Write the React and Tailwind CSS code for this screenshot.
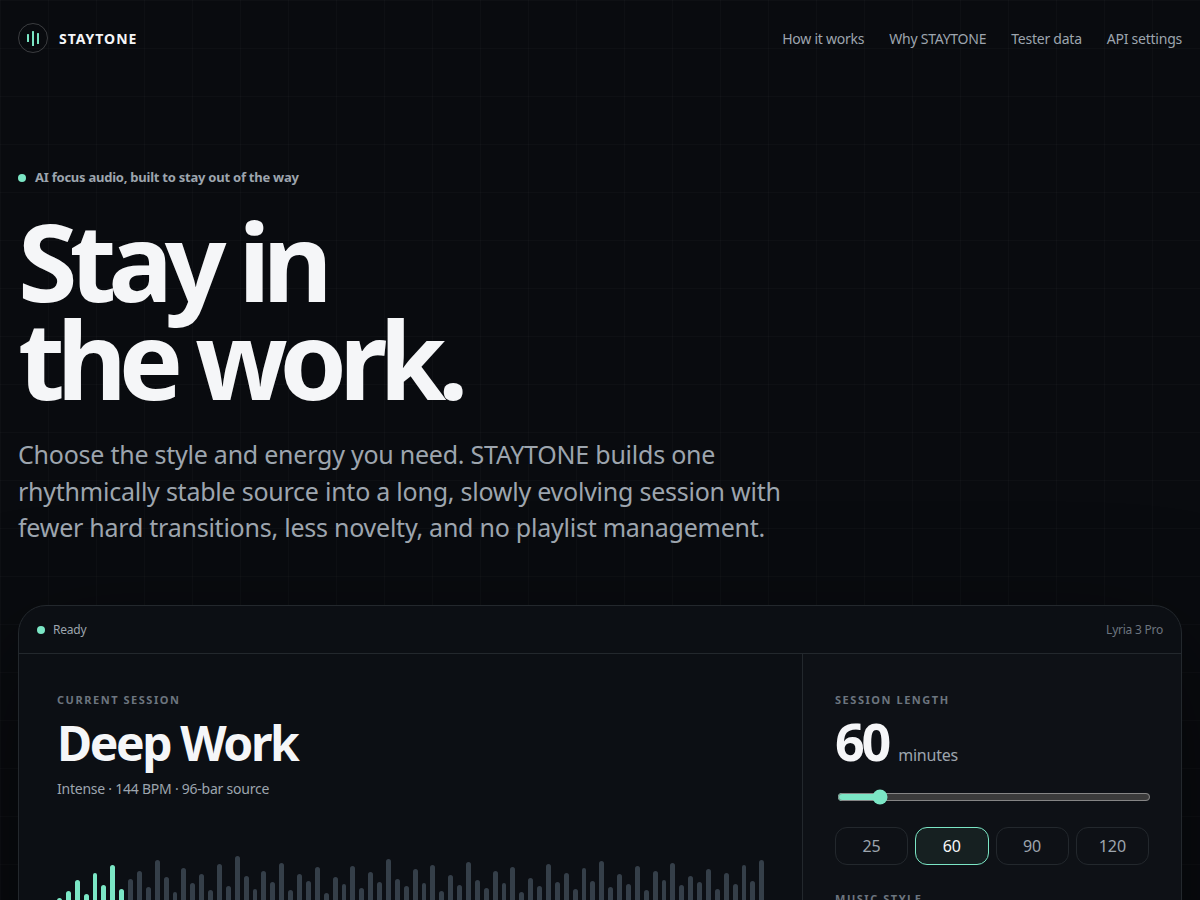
const NAV_LINKS = [
  { label: 'How it works', href: '#how' },
  { label: 'Why STAYTONE', href: '#why' },
  { label: 'Tester data', href: '#data' },
  { label: 'API settings', href: '#api' },
];

const PRESETS = [25, 60, 90, 120];

const PLAYED_BARS = 8;
const BAR_HEIGHTS = [
  44, 58, 80, 52, 94, 70, 110, 62, 82, 98, 66, 120, 86, 56, 104, 74, 92, 60, 112, 68,
  128, 88, 62, 98, 76, 114, 60, 92, 78, 106, 54, 86, 72, 108, 64, 96, 76, 122, 82, 68,
  102, 74, 110, 58, 90, 70, 116, 80, 64, 98, 74, 106, 56, 84, 68, 112, 76, 94, 62, 104,
  78, 118, 66, 92, 72, 108, 60, 98, 80, 114, 70, 88, 76, 102, 62, 94, 72, 110, 78, 120,
];

function Logo() {
  return (
    <a href="#top" className="flex items-center gap-[11px]">
      <span className="grid size-[30px] place-items-center rounded-full border border-white/20">
        <svg width="28" height="28" viewBox="0 0 28 28" aria-hidden="true">
          <g fill="#7be6c5">
            <rect x="8" y="10" width="2" height="8" rx="0.5" />
            <rect x="13" y="7" width="2" height="15" rx="0.5" />
            <rect x="18" y="9" width="2" height="11" rx="0.5" />
          </g>
        </svg>
      </span>
      <span className="text-sm leading-[21px] font-bold tracking-[0.07em]">STAYTONE</span>
    </a>
  );
}

function Header() {
  return (
    <header className="flex h-[76px] items-center justify-between">
      <Logo />
      <nav className="flex gap-[25px] text-sm leading-[21px] text-[#9da5ae]">
        {NAV_LINKS.map((link) => (
          <a key={link.label} href={link.href}>
            {link.label}
          </a>
        ))}
      </nav>
    </header>
  );
}

function Dot() {
  return <span className="size-2 shrink-0 rounded-full bg-[#7be6c5]" />;
}

function Label({ children }) {
  return (
    <div className="text-[11px] leading-4 font-bold tracking-[0.14em] text-[#6c757f] uppercase">
      {children}
    </div>
  );
}

function Waveform() {
  return (
    <div className="mt-[49px] flex h-[144px] items-center gap-1" aria-hidden="true">
      {BAR_HEIGHTS.map((height, i) => (
        <span
          key={i}
          className={i < PLAYED_BARS ? 'flex-1 rounded-full bg-[#7be6c5]' : 'flex-1 rounded-full bg-[#353f49]'}
          style={{ height }}
        />
      ))}
    </div>
  );
}

function SessionPanel() {
  return (
    <section className="min-w-0 flex-1 p-[38px]">
      <Label>Current session</Label>
      <h2 className="mt-[7px] text-[48px] leading-[56px] font-bold tracking-[-0.05em]">Deep Work</h2>
      <p className="mt-2 text-sm leading-5 text-[#9da5ae]">Intense · 144 BPM · 96-bar source</p>
      <Waveform />
    </section>
  );
}

function SettingsPanel() {
  return (
    <section className="w-[379px] border-l border-[#23282d] bg-[#0e1116] px-8 py-[38px]">
      <Label>
        <label htmlFor="length">Session length</label>
      </Label>
      <div className="mt-[5px] flex items-baseline gap-[10px]">
        <span className="text-[52px] leading-[56px] font-bold tracking-[-0.06em]">60</span>
        <span className="text-base text-[#9da5ae]">minutes</span>
      </div>
      <input
        id="length"
        type="range"
        min="20"
        max="360"
        step="5"
        defaultValue="60"
        className="m-[2px] mt-5 block w-full accent-[#7be6c5]"
      />
      <div className="mt-[22px] grid grid-cols-4 gap-[7px]">
        {PRESETS.map((minutes) => (
          <button
            key={minutes}
            type="button"
            className={
              minutes === 60
                ? 'h-[38px] rounded-xl border border-[#7be6c5] bg-[#162021] text-base tracking-normal text-[#f5f6f8]'
                : 'h-[38px] rounded-xl border border-[#23282d] text-base tracking-normal text-[#9da5ae]'
            }
          >
            {minutes}
          </button>
        ))}
      </div>
      <div className="mt-[26px]">
        <Label>Music style</Label>
      </div>
    </section>
  );
}

export default function App() {
  return (
    <div
      id="top"
      className="relative isolate min-h-screen overflow-hidden bg-[#090b0f] font-['Noto_Sans',sans-serif] tracking-[-0.015rem] text-[#f5f6f8] scheme-dark"
    >
      <div
        className="absolute inset-0 -z-10 bg-[linear-gradient(rgba(255,255,255,0.018)_1px,transparent_1px),linear-gradient(90deg,rgba(255,255,255,0.018)_1px,transparent_1px)] bg-size-[48px_48px]"
        aria-hidden="true"
      />
      <div className="px-[18px]">
        <Header />
        <main>
          <section className="pt-[91px]">
            <p className="flex items-center gap-[9px] text-[13px] leading-[21px] font-bold text-[#9da5ae]">
              <Dot />
              AI focus audio, built to stay out of the way
            </p>
            <h1 className="mt-6 text-[108px] leading-[98px] font-bold tracking-[-0.075em]">
              Stay in
              <br />
              the work.
            </h1>
            <p className="mt-7 max-w-[780px] text-[25px] leading-[1.46] text-[#9da5ae]">
              Choose the style and energy you need. STAYTONE builds one rhythmically stable source into a long,
              slowly evolving session with fewer hard transitions, less novelty, and no playlist management.
            </p>
          </section>
          <article className="mt-[59px] overflow-hidden rounded-[28px] border border-[#23282d] bg-[#0c0f14] shadow-[0_40px_120px_rgba(0,0,0,0.5)]">
            <div className="flex h-12 items-center justify-between border-b border-[#23282d] px-[18px] pt-0.5 text-xs">
              <span className="flex items-center gap-2 text-[#9da5ae]">
                <Dot />
                Ready
              </span>
              <span className="text-[#6c757f]">Lyria 3 Pro</span>
            </div>
            <div className="flex">
              <SessionPanel />
              <SettingsPanel />
            </div>
          </article>
        </main>
      </div>
    </div>
  );
}
